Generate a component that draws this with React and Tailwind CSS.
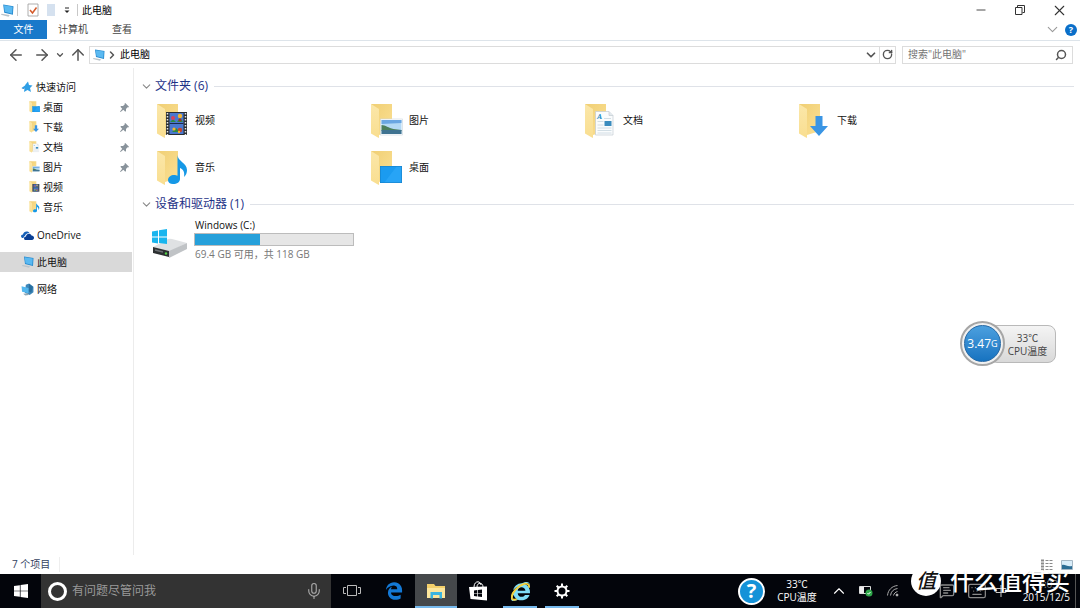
import React, { useState } from 'react';
import { ArrowLeft, ArrowRight, ArrowUp, ChevronDown, ChevronRight, ChevronUp, Keyboard, MessageSquareText, Mic, Minus, RotateCw, Search, X } from 'lucide-react';
import { FaEdgeLegacy, FaInternetExplorer } from 'react-icons/fa';

const quickAccess = [
  { name: '桌面', kind: 'desktop', pinned: true },
  { name: '下载', kind: 'download', pinned: true },
  { name: '文档', kind: 'document', pinned: true },
  { name: '图片', kind: 'picture', pinned: true },
  { name: '视频', kind: 'video' },
  { name: '音乐', kind: 'music' },
];

const folders = [
  { name: '视频', kind: 'video' },
  { name: '图片', kind: 'picture' },
  { name: '文档', kind: 'document' },
  { name: '下载', kind: 'download' },
  { name: '音乐', kind: 'music' },
  { name: '桌面', kind: 'desktop' },
];

const drives = [{ name: 'Windows (C:)', free: 69.4, total: 118 }];

// Overlay drawn in front of the folder
function FolderBadge({ kind }) {
  switch (kind) {
    case 'video':
      return (
        <g>
          <rect x="10" y="9" width="21" height="23" fill="#2b2f33" />
          <path d="M11.5 10v22M29.5 10v22" stroke="#e8e8e8" strokeWidth="1.5" strokeDasharray="1.5 1.5" />
          <rect x="13.5" y="10" width="14" height="21" fill="#4a78cf" />
          <path d="M13.5 20.5h14" stroke="#1c2a4a" />
          <path d="M14 19l3-3 3 3zM16 29l4-4 4 4zM21 19l3-4 3 4z" fill="#2d8a42" />
          <circle cx="17" cy="15" r="2" fill="#d8435a" />
          <circle cx="24" cy="13" r="2.2" fill="#f2b632" />
          <circle cx="24" cy="17" r="1.5" fill="#a33122" />
          <circle cx="18" cy="26" r="1.6" fill="#f2b632" />
          <circle cx="24" cy="27" r="2.2" fill="#c7452b" />
          <circle cx="23" cy="29" r="1.2" fill="#f2b632" />
        </g>
      );
    case 'picture':
      return (
        <g>
          <rect x="10.5" y="16" width="22" height="16" fill="#fff" stroke="#c9d4dc" strokeWidth=".6" />
          <rect x="11.5" y="17" width="20" height="14" fill="#b4d9f5" />
          <path d="M11.5 17h20v3l-20 1z" fill="#6aa6e2" />
          <path d="M11.5 22c4 0 7 3 12 4l8 1v1h-20z" fill="#4c7f5c" />
          <path d="M11.5 27h20v4h-20z" fill="#3f7391" />
        </g>
      );
    case 'document':
      return (
        <g>
          <path d="M11.5 8.5H25l4 4V32H11.5z" fill="#fafcfd" stroke="#c3ccd3" strokeWidth=".7" />
          <path d="M25 8.5v4h4" fill="#e3e9ed" stroke="#c3ccd3" strokeWidth=".7" />
          <text x="13" y="16" className="fill-[#2b8fc4] font-serif text-[8px] font-bold italic">A</text>
          <path d="M13.5 18.5h6M13.5 22h6M13.5 25h14M13.5 27.5h14M13.5 30h14M20 15.5h7" stroke="#c8d5de" strokeWidth=".8" />
          <rect x="20.5" y="18" width="7" height="5" fill="#3b8cbe" />
        </g>
      );
    case 'download':
      return <path d="M17.5 13h7v10h5.5l-9 10-9-10h5.500z" fill="#3a95e4" />;
    case 'music':
      return (
        <path
          d="M21.5 5c0 6 9.500 8 9.500 15 0 3-1 5-3 7 1-5-1-8-4-9v11c0 3-3 5-7 5-3 0-5-1.500-5-4 0-3 3-5 6-5 1.500 0 2.500.3 3.500.8z"
          fill="#1598e6"
        />
      );
    default:
      return (
        <g>
          <rect x="10" y="16" width="22" height="17" fill="#1b9bf0" />
          <path d="M14 33L27 16h5v17z" fill="#27a4f6" />
          <rect x="10.3" y="16.3" width="21.4" height="16.4" fill="none" stroke="#1680c8" strokeWidth=".6" />
        </g>
      );
  }
}

function FolderIcon({ kind, className }) {
  return (
    <svg viewBox="0 0 36 36" className={className} aria-hidden="true">
      <defs>
        <linearGradient id="folder-back" x1="0" y1="0" x2="1" y2="1">
          <stop offset="0" stopColor="#f0cf74" />
          <stop offset="1" stopColor="#fbe094" />
        </linearGradient>
        <linearGradient id="folder-flap" x1="0" y1="0" x2="0" y2="1">
          <stop offset="0" stopColor="#fbe7a9" />
          <stop offset="1" stopColor="#f9de90" />
        </linearGradient>
      </defs>
      <path d="M1 1h21v27L9 32z" fill="url(#folder-back)" />
      <path d="M1 1l8 5v29l-2-1-6-3.5z" fill="url(#folder-flap)" />
      <FolderBadge kind={kind} />
    </svg>
  );
}

function PcIcon({ className }) {
  return (
    <svg viewBox="0 0 24 24" className={className} aria-hidden="true">
      <path d="M1 18l15 2.500-2 3L0 20z" fill="#b9c3ca" />
      <path d="M4 1l19 3-1 16L6 16z" fill="#2487cc" />
      <path d="M5.500 2.500l16 2.700-1 12.800L7 14.500z" fill="#5ab9f1" />
    </svg>
  );
}

function WindowsLogo({ className }) {
  return (
    <svg viewBox="0 0 16 16" className={className} fill="currentColor" aria-hidden="true">
      <path d="M0 2.300l6.700-1v6.300H0zM7.500 1.200L16 0v7.600H7.500zM0 8.400h6.700v6.300l-6.700-1zM7.500 8.400H16V16l-8.500-1.200z" />
    </svg>
  );
}

function DriveIcon() {
  return (
    <svg viewBox="0 0 36 30" className="h-[30px] w-9 shrink-0" aria-hidden="true">
      <path d="M1 18L16 10q2-.5 4 0l15 4-18 9z" fill="#dfe1e3" />
      <path d="M1 18l16 4v6L1 24z" fill="#2d3032" />
      <path d="M17 22l18-8v6l-18 9z" fill="#c0c3c6" />
      <path d="M3 21l8 2" stroke="#6d7174" strokeWidth="1.5" />
      <circle cx="14" cy="24.500" r="1.200" fill="#53d147" />
      <path d="M0 2.500l6-1v6H0zM7 1.300L15 0v7.500H7zM0 8.500h6v6l-6-1zM7 8.500h8V15l-8-1z" fill="#19b5ee" />
    </svg>
  );
}

function PinIcon() {
  return (
    <svg viewBox="0 0 12 12" className="h-[9px] w-[9px]" fill="#89939b" aria-hidden="true">
      <path d="M7 0l5 5-1 1-1-.3-2 2.300v2.500l-1 1L4.500 9 .8 12 0 11.200 3 7.500.5 5l1-1H4l2.300-2L6 1z" />
    </svg>
  );
}

function StarIcon() {
  return (
    <svg viewBox="0 0 24 24" className="h-3 w-3" aria-hidden="true">
      <path d="M14 1l2 7 7 1-5 5 2 8-7-4-7 4 1-7-6-1 7-5 1-2z" fill="#2f9fe6" />
      <path d="M1 14h5l-1 2z" fill="#1b74bb" />
    </svg>
  );
}

function CloudIcon() {
  return (
    <svg viewBox="0 0 26 18" className="h-[9px] w-[13px]" aria-hidden="true">
      <path d="M5 14H3c-4-1-4-7 1-7C5 1 13-1 17 4c-5 0-9 3-9 6-2 0-3 2-3 4z" fill="#1660b8" />
      <path d="M9 18c-4 0-4-7 1-7 0-6 9-8 11-2 6 0 7 8 1 9z" fill="#0a3f95" />
    </svg>
  );
}

function NetworkIcon() {
  return (
    <svg viewBox="0 0 24 24" className="h-[13px] w-[13px]" aria-hidden="true">
      <path d="M9 3l6-2 8 6v10l-7 5-9-4z" fill="#3d86b8" />
      <path d="M15 2l7 5-3 11-5-3z" fill="#286f9f" />
      <path d="M1 6l13 3v10L2 16z" fill="#53b7ee" />
      <path d="M4 20l9-1 1 3-6 1z" fill="#8fa7b5" />
    </svg>
  );
}

function TitleBar() {
  return (
    <header className="flex h-5 items-center">
      <PcIcon className="ml-px h-[13px] w-[13px]" />
      <span className="ml-[3px] h-3 w-px bg-[#c8c8c8]" />
      <button className="ml-[9px]" aria-label="属性">
        <svg viewBox="0 0 12 14" className="h-[14px] w-3" aria-hidden="true">
          <path d="M1 1h10v12H1z" fill="#fff" stroke="#9a9a9a" strokeWidth=".8" />
          <path d="M3 7l2.500 3L9.500 4.500" fill="none" stroke="#d45a2a" strokeWidth="1.500" />
        </svg>
      </button>
      <button className="ml-2" aria-label="新建文件夹">
        <span className="block h-3 w-2 bg-[#d5e1ef]" />
      </button>
      <button className="ml-2" aria-label="自定义快速访问工具栏">
        <svg viewBox="0 0 8 8" className="h-2 w-2" aria-hidden="true">
          <path d="M2 2h4" stroke="#222" />
          <path d="M1.500 4.500h5L4 7z" fill="#222" />
        </svg>
      </button>
      <span className="ml-[6px] h-3 w-px bg-[#c8c8c8]" />
      <h1 className="ml-1 text-[10px] text-black">此电脑</h1>
      <div className="ml-auto flex items-center text-[#333]">
        <button className="flex w-[39px] justify-center" aria-label="最小化"><Minus size={14} strokeWidth={1.5} /></button>
        <button className="flex w-[39px] justify-center" aria-label="还原">
          <svg viewBox="0 0 10 10" className="h-[10px] w-[10px]" fill="none" stroke="currentColor" aria-hidden="true">
            <path d="M.5 2.500h6.500v7H.5zM2.500 2V.5h7v7H7.500" />
          </svg>
        </button>
        <button className="flex w-[41px] justify-center" aria-label="关闭"><X size={17} strokeWidth={1.5} /></button>
      </div>
    </header>
  );
}

function RibbonTabs() {
  return (
    <nav className="flex h-[21px] items-start border-b border-[#dde4ea] text-[10px] text-[#444]">
      <button className="h-[19px] w-[47px] bg-[#1979ca] text-white">文件</button>
      <button className="ml-[11px] h-[19px]">计算机</button>
      <button className="ml-6 h-[19px]">查看</button>
      <div className="mr-[3px] ml-auto flex h-[19px] items-center gap-1">
        <button aria-label="展开功能区"><ChevronDown size={17} strokeWidth={1.5} className="text-[#999]" /></button>
        <button className="flex h-3 w-3 items-center justify-center rounded-full bg-[#0a6fc9] text-[9px] font-bold text-white" aria-label="帮助">?</button>
      </div>
    </nav>
  );
}

function AddressBar({ query, onQuery }) {
  return (
    <div className="flex h-[27px] items-center text-[#555]">
      <button className="ml-[7px]" aria-label="后退"><ArrowLeft size={18} strokeWidth={2} /></button>
      <button className="ml-2" aria-label="前进"><ArrowRight size={18} strokeWidth={2} /></button>
      <button className="ml-1" aria-label="最近浏览的位置"><ChevronDown size={10} strokeWidth={3} /></button>
      <button className="ml-1" aria-label="上移"><ArrowUp size={18} strokeWidth={2} /></button>
      <div className="ml-[2px] flex h-[18px] flex-1 items-center border border-[#dcdcdc]">
        <PcIcon className="ml-[3px] h-3 w-3" />
        <ChevronRight size={12} strokeWidth={3} className="ml-px" />
        <span className="ml-[2px] text-[10px] text-black">此电脑</span>
        <button className="mr-px ml-auto" aria-label="历史记录"><ChevronDown size={14} strokeWidth={3} /></button>
        <button className="flex h-full w-4 items-center justify-center border-l border-[#dcdcdc]" aria-label="刷新">
          <RotateCw size={11} strokeWidth={3} />
        </button>
      </div>
      <label className="mr-[7px] ml-[6px] flex h-[18px] w-[171px] items-center border border-[#dcdcdc] px-[5px]">
        <input
          type="text"
          value={query}
          onChange={(e) => onQuery(e.target.value)}
          placeholder={'搜索"此电脑"'}
          aria-label="搜索"
          className="min-w-0 flex-1 text-[10px] text-black outline-none placeholder:text-[#757575]"
        />
        <Search size={12} strokeWidth={3} className="-scale-x-100" />
      </label>
    </div>
  );
}

function Sidebar() {
  return (
    <aside className="w-[134px] shrink-0 border-r border-[#ececec] pt-[9px] text-[10px] text-[#111]">
      <a href="#quick" className="flex h-5 items-center gap-[3px] pl-[21px]">
        <StarIcon />快速访问
      </a>
      <ul>
        {quickAccess.map((item) => (
          <li key={item.name}>
            <a href={`#${item.kind}`} className="flex h-5 items-center pr-1 pl-[29px]">
              <FolderIcon kind={item.kind} className="h-3 w-3" />
              <span className="ml-[2px] flex-1">{item.name}</span>
              {item.pinned && <PinIcon />}
            </a>
          </li>
        ))}
      </ul>
      <div className="flex flex-col gap-[7px] pt-2">
        <a href="#onedrive" className="flex h-5 items-center gap-[3px] pl-[21px]"><CloudIcon />OneDrive</a>
        <a href="#pc" className="mr-px flex h-5 items-center gap-[3px] bg-[#d9d9d9] pl-[22px]"><PcIcon className="h-3 w-3" />此电脑</a>
        <a href="#network" className="flex h-5 items-center gap-[3px] pl-[21px]"><NetworkIcon />网络</a>
      </div>
    </aside>
  );
}

function GroupHeader({ title }) {
  return (
    <h2 className="flex h-5 items-center text-[12px] text-[#1e3287]">
      <ChevronDown size={13} strokeWidth={2} className="text-[#888]" />
      <span className="ml-[2px]">{title}</span>
      <span className="ml-[6px] h-px flex-1 bg-[#dfe2e8]" />
    </h2>
  );
}

function DriveItem({ name, free, total }) {
  const used = 100 - (free / total) * 100;

  return (
    <li className="flex items-center gap-[6px]">
      <div className="pt-2"><DriveIcon /></div>
      <div className="w-40 text-[10px]">
        <p className="pl-px leading-[15px] text-[#111]">{name}</p>
        <div className="h-[13px] border border-[#bcbcbc] bg-[#e6e6e6]">
          <div className="h-full bg-[#26a0da]" style={{ width: `${used}%` }} />
        </div>
        <p className="pl-px leading-4 whitespace-nowrap text-[#777]">{free} GB 可用，共 {total} GB</p>
      </div>
    </li>
  );
}

function Content() {
  return (
    <main className="min-w-0 flex-1 px-[6px] pt-2">
      <GroupHeader title={`文件夹 (${folders.length})`} />
      <ul className="grid grid-cols-[repeat(auto-fill,214px)] gap-y-[11px] pt-[7px] pl-4">
        {folders.map((folder) => (
          <li key={folder.name} className="flex h-9 items-center gap-[3px] text-[10px] text-[#111]">
            <FolderIcon kind={folder.kind} className="h-9 w-9" />
            <span className="pb-[2px]">{folder.name}</span>
          </li>
        ))}
      </ul>
      <div className="pt-2">
        <GroupHeader title={`设备和驱动器 (${drives.length})`} />
      </div>
      <ul className="pt-1 pl-3">
        {drives.map((drive) => (
          <DriveItem key={drive.name} {...drive} />
        ))}
      </ul>
    </main>
  );
}

function StatusBar() {
  return (
    <footer className="flex h-[19px] items-center pr-[7px] pl-3 text-[10px] text-[#33435f]">
      <span className="border-r border-[#eee] pr-[9px]">7 个项目</span>
      <div className="ml-auto flex items-center gap-2">
        <button aria-label="详细信息">
          <svg viewBox="0 0 12 12" className="h-3 w-3" stroke="#8a8a8a" aria-hidden="true">
            <path d="M0 1.500h3M0 4.500h3M0 7.500h3M0 10.500h3" strokeWidth="2" />
            <path d="M4.500 1.500H12M4.500 4.500H12M4.500 7.500H12M4.500 10.500H12" strokeDasharray="3 1" />
          </svg>
        </button>
        <button aria-label="大图标">
          <svg viewBox="0 0 12 10" className="h-[10px] w-3" aria-hidden="true">
            <path d="M.5.5h11v9H.5z" fill="#d9edf9" stroke="#a5b7c4" />
            <path d="M1 5c3-1 5 2 10 1v3H1z" fill="#2b6d94" />
          </svg>
        </button>
      </div>
    </footer>
  );
}

// Floating CPU monitor
function CpuWidget() {
  return (
    <div className="absolute top-[321px] right-6 flex items-center">
      <div className="z-10 flex h-[45px] w-[45px] items-center justify-center rounded-full border-2 border-[#a6a6a6] bg-[#f1f1f1] p-[2px]">
        <div className="flex h-full w-full items-center justify-center rounded-full border border-[#2468a5] bg-linear-to-b from-[#4ba0df] to-[#1673c0] text-[12px] text-white">
          3.47<span className="text-[9px]">G</span>
        </div>
      </div>
      <div className="-ml-4 h-[38px] w-[67px] rounded-lg border border-[#b9b9b9] bg-linear-to-b from-[#f4f4f4] to-[#d9d9d9] pt-[6px] pl-[10px] text-center text-[10px] leading-[13px] text-[#444]">
        <p>33℃</p>
        <p className="whitespace-nowrap">CPU温度</p>
      </div>
    </div>
  );
}

function TaskButton({ label, active, running, children }) {
  return (
    <button
      aria-label={label}
      className={`flex h-full w-[42px] flex-col items-center ${active ? 'bg-[#45484b]' : ''}`}
    >
      <span className="flex flex-1 items-center pt-[2px]">{children}</span>
      <span className={`h-[2px] ${active ? 'w-full bg-[#76b9ed]' : ''} ${running ? 'w-[34px] bg-[#76b9ed]' : ''}`} />
    </button>
  );
}

function Taskbar() {
  return (
    <div className="flex h-[34px] items-center bg-[#03050b] text-white">
      <button className="flex h-full w-[41px] items-center justify-center" aria-label="开始">
        <WindowsLogo className="h-[14px] w-[14px]" />
      </button>
      <label className="flex h-full w-[290px] items-center bg-[#333] pr-2 pl-[7px] text-[#999]">
        <span className="h-[19px] w-[19px] rounded-full border-3 border-white" />
        <input
          type="text"
          placeholder="有问题尽管问我"
          aria-label="搜索 Windows"
          className="ml-[5px] min-w-0 flex-1 text-[12px] outline-none placeholder:text-[#999]"
        />
        <Mic size={18} strokeWidth={1.5} className="text-[#aaa]" />
      </label>
      <TaskButton label="任务视图">
        <svg viewBox="0 0 18 12" className="h-3 w-[18px]" fill="none" stroke="#bbb" aria-hidden="true">
          <path d="M4.500.5h9v10h-9zM3 2.500H.5v6H3M15 2.500h2.500v6H15" />
        </svg>
      </TaskButton>
      <TaskButton label="Microsoft Edge"><FaEdgeLegacy size={18} className="text-[#1379d6]" /></TaskButton>
      <TaskButton label="文件资源管理器" active>
        <svg viewBox="0 0 18 16" className="h-4 w-[18px]" aria-hidden="true">
          <path d="M0 1h7l1.500 2H18v12H0z" fill="#f3cf6a" />
          <path d="M0 5h18v10H0z" fill="#fce69c" />
          <path d="M3.500 9h11.500v6.500h-2.500V12H6v3.500H3.500z" fill="#3bb5e0" />
        </svg>
      </TaskButton>
      <TaskButton label="应用商店">
        <svg viewBox="0 0 18 20" className="h-5 w-[18px]" aria-hidden="true">
          <path d="M5 6C5 0 11-1 12 4M8 6c0-5 6-5 6 0" fill="none" stroke="#fff" />
          <path d="M0 6l18-.5V19.500L1.500 18z" fill="#fff" />
          <path d="M5 9.500l3.300-.4v2.800H5zM9 9l4-.5v3.400H9zM5 12.600h3.300v2.800L5 15zM9 12.600h4V16l-4-.5z" fill="#03050b" />
        </svg>
      </TaskButton>
      <TaskButton label="Internet Explorer" running>
        <span className="relative block">
          <FaInternetExplorer size={19} className="text-[#7fdcf6]" />
          <svg viewBox="0 0 20 20" className="absolute inset-0 h-full w-full" fill="none" stroke="#f4cf3b" strokeWidth="2" aria-hidden="true">
            <path d="M19 6c.5-3-2-5-5-4C7 4 0 12 1 17c.5 2 3 2 5 1" />
          </svg>
        </span>
      </TaskButton>
      <TaskButton label="设置" running>
        <svg viewBox="0 0 16 16" className="h-4 w-4" fill="none" stroke="#fff" aria-hidden="true">
          <circle cx="8" cy="8" r="4.500" strokeWidth="2" />
          <path d="M8 .5v3M8 12.500v3M.5 8h3M12.500 8h3M2.700 2.700l2 2M11.300 11.300l2 2M2.700 13.300l2-2M11.300 4.700l2-2" strokeWidth="2" />
        </svg>
      </TaskButton>

      {/* Tray */}
      <div className="ml-auto flex h-full items-center">
        <button className="flex h-[27px] w-[27px] items-center justify-center rounded-full border-2 border-white bg-[#1592d8] text-[20px] leading-none font-bold" aria-label="帮助">?</button>
        <div className="ml-2 w-[48px] text-center text-[10px] leading-[13px] whitespace-nowrap">
          <p>33℃</p>
          <p>CPU温度</p>
        </div>
        <button className="ml-[9px]" aria-label="显示隐藏的图标"><ChevronUp size={18} strokeWidth={1.5} /></button>
        <svg viewBox="0 0 14 12" className="ml-[11px] h-3 w-[14px]" aria-hidden="true">
          <path d="M.5 1.500h11v7H.5z" fill="none" stroke="#ddd" />
          <path d="M1 2h4v6H1z" fill="#eee" />
          <circle cx="10" cy="8" r="3.500" fill="#2fa84a" />
          <path d="M8.500 8l1 1.200L11.500 7" fill="none" stroke="#fff" />
        </svg>
        <svg viewBox="0 0 12 12" className="ml-[14px] h-3 w-3" fill="none" stroke="#aaa" aria-hidden="true">
          <path d="M.5 10.500C1 5 5 1 10.500.5M3.500 10.500c.5-4 3-6.500 7-7M6.500 10.500c.5-2 2-3.500 4-4" />
          <circle cx="10" cy="10" r="1" fill="#fff" />
        </svg>
        <MessageSquareText size={16} strokeWidth={2} className="ml-10 text-[#8a8a8a]" />
        <Keyboard size={20} strokeWidth={1.5} className="ml-3 text-[#8a8a8a]" />
        <svg viewBox="0 0 12 12" className="ml-2 h-3 w-3" stroke="#ccc" fill="none" aria-hidden="true">
          <path d="M1 3.500h10v4H1zM6 0v12" />
        </svg>
        <div className="mr-[5px] ml-[7px] w-[56px] text-right text-[10px] leading-[13px]">
          <p className="pr-3 text-[#888]">9:03</p>
          <p>2015/12/5</p>
        </div>
        <span className="mr-1 h-full w-px bg-[#555]" />
      </div>
    </div>
  );
}

function Watermark() {
  return (
    <div className="pointer-events-none absolute right-[10px] bottom-3 flex items-center gap-[9px] text-white">
      <span className="flex h-[30px] w-[30px] items-center justify-center rounded-full bg-white text-[20px] leading-none font-medium text-[#111] italic">值</span>
      <span className="text-[24px] leading-[30px] font-medium text-shadow-sm">什么值得买</span>
    </div>
  );
}

export default function App() {
  const [query, setQuery] = useState('');

  return (
    <div className="relative flex min-h-screen flex-col overflow-hidden bg-white font-['Open_Sans','Noto_Sans_CJK_SC',sans-serif]">
      <TitleBar />
      <RibbonTabs />
      <AddressBar query={query} onQuery={setQuery} />
      <div className="flex flex-1">
        <Sidebar />
        <Content />
      </div>
      <StatusBar />
      <Taskbar />
      <CpuWidget />
      <Watermark />
    </div>
  );
}
